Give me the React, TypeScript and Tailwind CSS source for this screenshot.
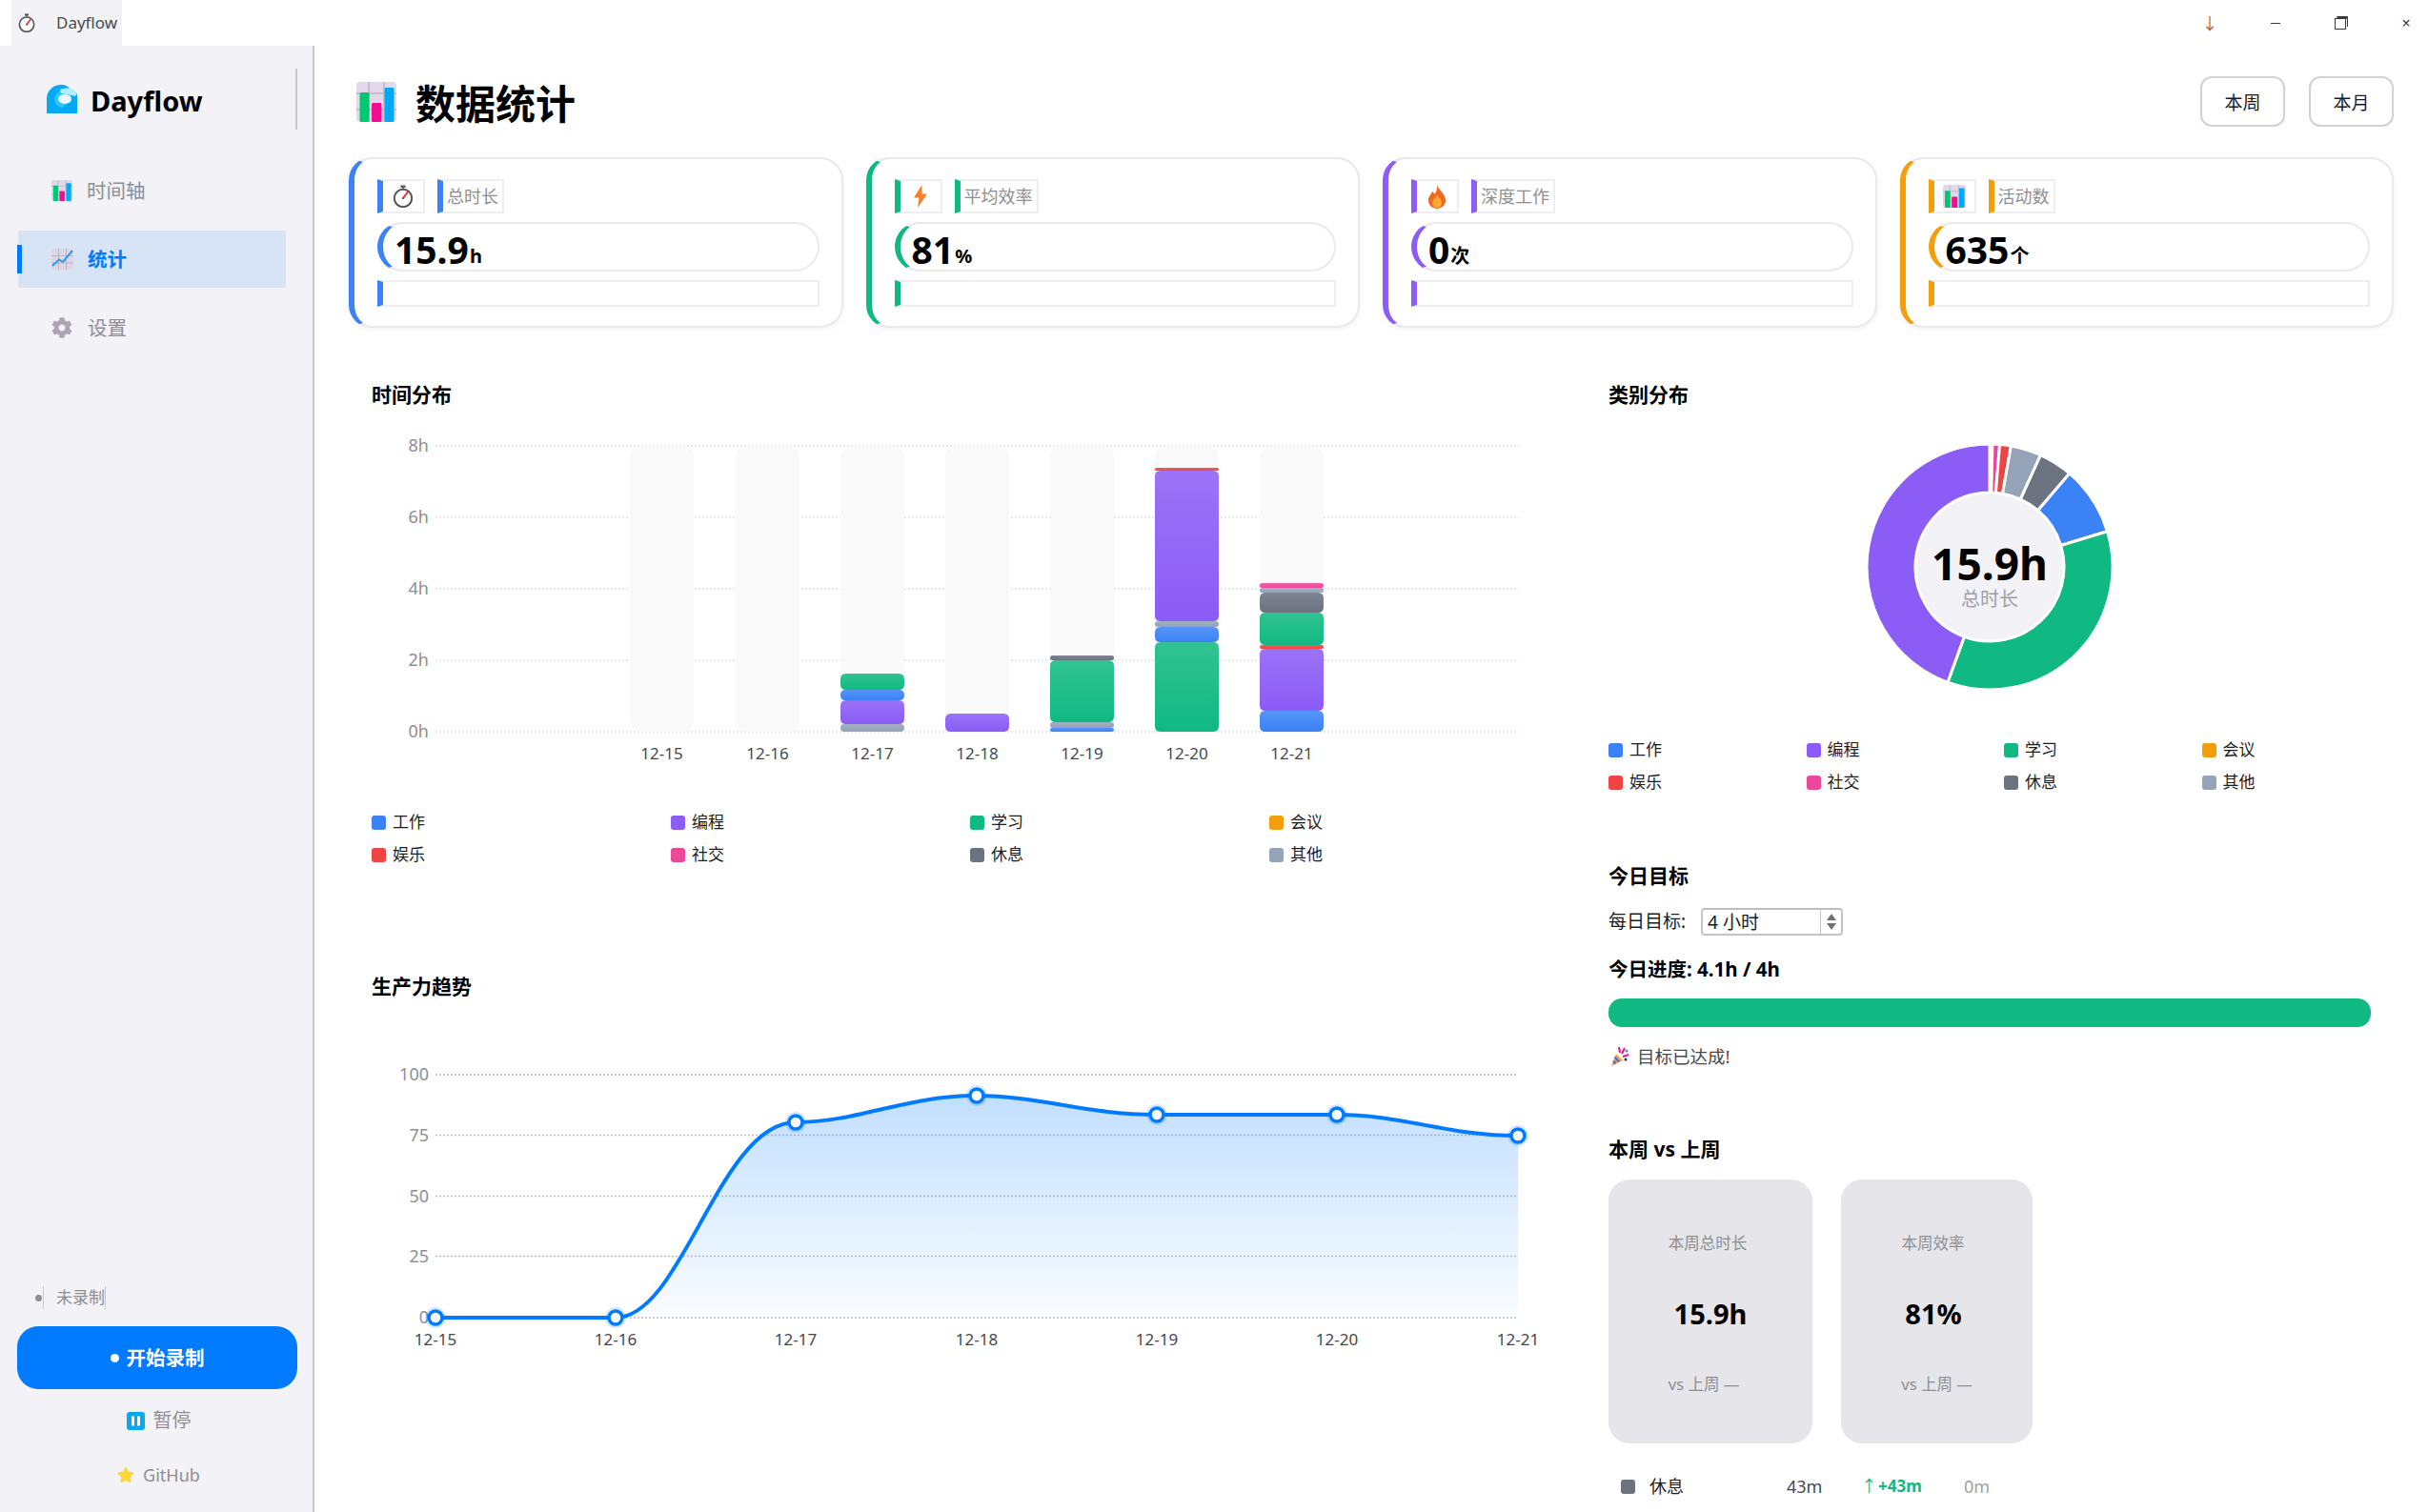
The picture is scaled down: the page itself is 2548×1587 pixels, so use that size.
import { FaCog, FaStar } from "react-icons/fa"

const BLUE = "#3b82f6"
const PURPLE = "#8b5cf6"
const GREEN = "#10b981"
const RED = "#ef4444"
const PINK = "#ec4899"
const GRAY = "#6b7280"
const SLATE = "#94a3b8"

const LEGEND = [
  ["工作", "bg-[#3b82f6]"],
  ["编程", "bg-[#8b5cf6]"],
  ["学习", "bg-[#10b981]"],
  ["会议", "bg-[#f59e0b]"],
  ["娱乐", "bg-[#ef4444]"],
  ["社交", "bg-[#ec4899]"],
  ["休息", "bg-[#6b7280]"],
  ["其他", "bg-[#94a3b8]"],
]

// [colour, top y, bottom y] in chart pixels, read off the bars
const BARS: { day: string; x: number; parts: [string, number, number][] }[] = [
  { day: "12-15", x: 661, parts: [] },
  { day: "12-16", x: 772, parts: [] },
  {
    day: "12-17",
    x: 882,
    parts: [
      [SLATE, 760, 768],
      [PURPLE, 735, 760],
      [BLUE, 724, 735],
      [GREEN, 707, 724],
    ],
  },
  { day: "12-18", x: 992, parts: [[PURPLE, 749, 768]] },
  {
    day: "12-19",
    x: 1102,
    parts: [
      [BLUE, 764, 768],
      [SLATE, 758, 764],
      [GREEN, 693, 758],
      [GRAY, 688, 693],
    ],
  },
  {
    day: "12-20",
    x: 1212,
    parts: [
      [GREEN, 674, 768],
      [BLUE, 658, 674],
      [SLATE, 652, 658],
      [PURPLE, 494, 652],
      [RED, 491, 494],
    ],
  },
  {
    day: "12-21",
    x: 1322,
    parts: [
      [BLUE, 746, 768],
      [PURPLE, 681, 746],
      [RED, 677, 681],
      [GREEN, 643, 677],
      [GRAY, 622, 643],
      [SLATE, 617, 622],
      [PINK, 612, 617],
    ],
  },
]

const SLICES: [string, number, number][] = [
  [PINK, 1.3, 4.7],
  [RED, 4.7, 10],
  [SLATE, 10, 24.5],
  [GRAY, 24.5, 40.5],
  [BLUE, 40.5, 73.2],
  [GREEN, 73.2, 200],
  [PURPLE, 200, 360],
]

const TREND = [
  [457, 1383],
  [646, 1383],
  [835, 1178],
  [1025, 1150],
  [1214, 1170],
  [1403, 1170],
  [1593, 1192],
]

const STATS = [
  { label: "总时长", value: "15.9", unit: "h", icon: <Stopwatch size={24} />, border: "border-l-[#3b82f6]" },
  { label: "平均效率", value: "81", unit: "%", icon: <Bolt />, border: "border-l-[#10b981]" },
  { label: "深度工作", value: "0", unit: "次", icon: <Flame />, border: "border-l-[#8b5cf6]" },
  { label: "活动数", value: "635", unit: "个", icon: <ChartIcon size={24} />, border: "border-l-[#f59e0b]" },
]

function Stopwatch({ size }: { size: number }) {
  return (
    <svg width={size} height={size} viewBox="0 0 24 24">
      <rect x="9.5" y="0.5" width="5" height="2.5" fill="#555" />
      <rect x="11" y="2.5" width="2" height="2.5" fill="#777" />
      <circle cx="12" cy="14" r="9.2" fill="#fff" stroke="#555" strokeWidth="2" />
      <path d="M12 14 L16.5 8" stroke="#ef2b2d" strokeWidth="2" strokeLinecap="round" />
      <circle cx="12" cy="14" r="1" fill="#555" />
    </svg>
  )
}

function ChartIcon({ size }: { size: number }) {
  return (
    <svg width={size} height={size} viewBox="0 0 42 42" className="shrink-0">
      <rect width="42" height="42" rx="4" fill="#e1d9ea" />
      <path d="M13 0V42M29 0V42M0 12H42M0 29H42" stroke="#bdb5c6" strokeWidth="1.5" />
      <rect x="3.5" y="11" width="10" height="31" rx="1.5" fill="#00c872" />
      <rect x="16" y="22" width="10.5" height="20" rx="1.5" fill="#f50c90" />
      <rect x="29.5" y="6" width="10" height="36" rx="1.5" fill="#03a9f4" />
    </svg>
  )
}

function TrendIcon() {
  return (
    <svg width="23" height="22" viewBox="0 0 23 22">
      <rect width="23" height="22" rx="3" fill="#dcd6e6" />
      <path d="M7.5 0V22M15.5 0V22M0 7.5H23M0 15H23" stroke="#bdb5c6" strokeWidth="1" />
      <path d="M1 18L8 11.5L12 14L22 2" fill="none" stroke="#2e9be6" strokeWidth="2" />
    </svg>
  )
}

function Bolt() {
  return (
    <svg width="16" height="24" viewBox="0 0 16 24">
      <path d="M9.5 0L1 13.5H6.5L5 24L15 9.5H9.5Z" fill="#f97e2b" />
    </svg>
  )
}

function Flame() {
  return (
    <svg width="20" height="25" viewBox="0 0 20 25">
      <path d="M10 0C11 5 19 9 19 16C19 21.5 15 25 10 25C5 25 1 21.5 1 16C1 12 4 10 5 7C6.5 8 7 9 7.5 10C9.5 7 10.5 4 10 0Z" fill="#f4651f" />
      <path d="M10 10C11 13 15 15 15 18.5C15 22 13 24 10 24C7 24 5 22 5 18.5C5 15.5 9 13.5 10 10Z" fill="#fba931" />
    </svg>
  )
}

function Party() {
  return (
    <svg width="20" height="22" viewBox="0 0 20 22">
      <path d="M1 21L6 8L13 15Z" fill="#f2a33a" />
      <path d="M3 15.5L5.5 18.5M4.5 11.5L9 16.5" stroke="#4b6fd6" strokeWidth="2" />
      <path d="M9 1L10 7M15 2L12 8M13 11L19 9" stroke="#e6127f" strokeWidth="2" />
      <circle cx="17" cy="5" r="1.5" fill="#1fa5e0" />
      <circle cx="16" cy="14" r="1.5" fill="#2b2b55" />
    </svg>
  )
}

function WaveLogo() {
  return (
    <svg width="32" height="30" viewBox="0 0 32 30" className="shrink-0">
      <path d="M0 30V15C0 6 7 0 15 0C20 0 23 2 25 5L32 10V30Z" fill="#03a9f4" />
      <circle cx="17" cy="15" r="9" fill="#2cc6fb" />
      <path d="M14 5C19 3 25 3 28 5L32 9L30 12L22 10L15 9Z" fill="#b5ecff" />
      <ellipse cx="19" cy="15" rx="7" ry="5" fill="#e8faff" />
      <path d="M16 30C15 25 18 20 24 19L32 14V30Z" fill="#03a9f4" />
    </svg>
  )
}

function PauseIcon() {
  return (
    <svg width="19" height="19" viewBox="0 0 19 19">
      <rect width="19" height="19" rx="3" fill="#03a9f4" />
      <rect x="5" y="4.5" width="3" height="10" fill="#fff" />
      <rect x="11" y="4.5" width="3" height="10" fill="#fff" />
    </svg>
  )
}

function RestoreIcon() {
  return (
    <svg width="14" height="14" viewBox="0 0 14 14">
      <path d="M2.5 0.5H13.5V11" fill="none" stroke="#3a3a3c" strokeWidth="1" />
      <rect x="2.5" y="0" width="11" height="2.5" fill="#3a3a3c" />
      <rect x="0.5" y="2.5" width="11" height="11" fill="#fff" stroke="#3a3a3c" strokeWidth="1" />
    </svg>
  )
}

function Legend() {
  return (
    <div className="grid grid-cols-4 gap-x-[30px] gap-y-[8px]">
      {LEGEND.map(([name, color]) => (
        <div key={name} className="flex h-[26px] items-center gap-[7px]">
          <span className={`h-[15px] w-[15px] rounded-[3px] ${color}`} />
          <span className="text-[17px] text-[#1c1c1e]">{name}</span>
        </div>
      ))}
    </div>
  )
}

function StatCard({ stat }: { stat: (typeof STATS)[number] }) {
  return (
    <div className={`h-[179px] rounded-[24px] border-2 border-l-[6px] border-[#e9e9ee] bg-white pt-[21px] pr-[23px] pl-[24px] shadow-[0_2px_6px_rgba(0,0,0,0.05)] ${stat.border}`}>
      <div className="flex h-[36px] gap-[13px]">
        <div className={`flex w-[50px] items-center justify-center border-2 border-l-[6px] border-[#eeeef2] ${stat.border}`}>
          {stat.icon}
        </div>
        <div className={`flex items-center border-2 border-l-[6px] border-[#eeeef2] px-[4px] text-[18px] text-[#8e8e93] ${stat.border}`}>
          {stat.label}
        </div>
      </div>
      <div className={`mt-[9px] flex h-[52px] items-end rounded-full border-2 border-l-[6px] border-[#e9e9ee] pl-3 font-bold text-black ${stat.border}`}>
        <span className="text-[39px] leading-[42px]">{stat.value}</span>
        <span className="mb-[2px] ml-[1px] text-[20px] leading-[24px]">{stat.unit}</span>
      </div>
      <div className={`mt-[9px] h-[28px] border-2 border-l-[6px] border-[#eeeef2] ${stat.border}`} />
    </div>
  )
}

function SectionTitle({ children }: { children: React.ReactNode }) {
  return <h3 className="h-7 text-[21px] leading-[28px] font-bold text-black">{children}</h3>
}

function barPath(x: number, w: number, top: number, bottom: number) {
  const r = Math.min(6, (bottom - top) / 2)
  return `M${x} ${bottom - r}V${top + r}Q${x} ${top} ${x + r} ${top}H${x + w - r}Q${x + w} ${top} ${x + w} ${top + r}V${bottom - r}Q${x + w} ${bottom} ${x + w - r} ${bottom}H${x + r}Q${x} ${bottom} ${x} ${bottom - r}Z`
}

function BarChart() {
  return (
    <svg width="1226" height="380" viewBox="390 440 1226 380" className="mt-3 block">
      <defs>
        <linearGradient id="shade" x1="0" y1="0" x2="0" y2="1">
          <stop offset="0" stopColor="#fff" stopOpacity="0.14" />
          <stop offset="1" stopColor="#fff" stopOpacity="0" />
        </linearGradient>
      </defs>
      {["8h", "6h", "4h", "2h", "0h"].map((label, i) => (
        <g key={label}>
          <line x1="457" x2="1594" y1={468 + i * 75} y2={468 + i * 75} stroke="#e8e8e8" strokeWidth="2" strokeDasharray="2 2" />
          <text x="450" y={474 + i * 75} textAnchor="end" fontSize="18" fill="#8e8e93">
            {label}
          </text>
        </g>
      ))}
      {BARS.map((bar) => (
        <g key={bar.day}>
          <rect x={bar.x} y="468" width="67" height="300" rx="12" fill="#f9f9f9" />
          {bar.parts.map(([color, top, bottom]) => (
            <g key={color + top}>
              <path d={barPath(bar.x, 67, top, bottom)} fill={color} />
              <path d={barPath(bar.x, 67, top, bottom)} fill="url(#shade)" />
            </g>
          ))}
          <text x={bar.x + 33.5} y="797" textAnchor="middle" fontSize="17" fill="#48484a">
            {bar.day}
          </text>
        </g>
      ))}
    </svg>
  )
}

function TrendChart() {
  const line = "M457 1383H646C716 1383 755 1178 835 1178C900 1178 950 1150 1025 1150C1090 1150 1140 1170 1214 1170H1403C1470 1170 1520 1192 1593 1192"
  return (
    <svg width="1240" height="330" viewBox="390 1100 1240 330" className="block">
      <defs>
        <linearGradient id="area" x1="0" y1="0" x2="0" y2="1">
          <stop offset="0" stopColor="#007aff" stopOpacity="0.24" />
          <stop offset="1" stopColor="#007aff" stopOpacity="0.02" />
        </linearGradient>
      </defs>
      {[
        ["100", 1128],
        ["75", 1191.5],
        ["50", 1255.5],
        ["25", 1318.5],
        ["0", 1383],
      ].map(([label, y]) => (
        <g key={label}>
          <line x1="457" x2="1593" y1={y} y2={y} stroke="#bdbdc2" strokeWidth="1.5" strokeDasharray="2 2" />
          <text x="450" y={Number(y) + 6} textAnchor="end" fontSize="18" fill="#8e8e93">
            {label}
          </text>
        </g>
      ))}
      <path d={`${line}V1383H646Z`} fill="url(#area)" />
      <path d={line} fill="none" stroke="#007aff" strokeWidth="4" />
      {TREND.map(([x, y], i) => (
        <g key={x}>
          <circle cx={x} cy={y} r="11" fill="#007aff" fillOpacity="0.18" />
          <circle cx={x} cy={y} r="7" fill="#fff" stroke="#007aff" strokeWidth="3.5" />
          <text x={x} y="1412" textAnchor="middle" fontSize="17" fill="#48484a">
            {`12-${15 + i}`}
          </text>
        </g>
      ))}
    </svg>
  )
}

function slicePath(from: number, to: number) {
  const cx = 400
  const cy = 155
  const pt = (r: number, deg: number) => {
    const a = (deg * Math.PI) / 180
    return `${cx + r * Math.sin(a)} ${cy - r * Math.cos(a)}`
  }
  const large = to - from > 180 ? 1 : 0
  return `M${pt(129, from)}A129 129 0 ${large} 1 ${pt(129, to)}L${pt(78, to)}A78 78 0 ${large} 0 ${pt(78, from)}Z`
}

function Donut() {
  return (
    <div className="relative mt-3 h-[300px]">
      <svg width="802" height="300" viewBox="0 0 802 300" className="block">
        <circle cx="400" cy="155" r="80" fill="#f2f2f7" />
        {SLICES.map(([color, from, to]) => (
          <path key={color} d={slicePath(from, to)} fill={color} stroke="#fff" strokeWidth="3" />
        ))}
      </svg>
      <div className="absolute top-[120px] left-[320px] flex w-[160px] flex-col items-center">
        <span className="text-[46px] leading-[62px] font-bold text-black">15.9h</span>
        <span className="-mt-[7px] text-[20px] leading-[28px] text-[#a0a0a5]">总时长</span>
      </div>
    </div>
  )
}

function CompareCard({
  label,
  value,
  className,
  labelClass,
  valueClass,
  vsClass,
}: {
  label: string
  value: string
  className: string
  labelClass: string
  valueClass: string
  vsClass: string
}) {
  return (
    <div className={`flex h-[277px] flex-col items-center justify-center rounded-[22px] bg-[#e5e5ea] pt-[5px] ${className}`}>
      <div className={`flex h-[74px] items-center text-[16.5px] text-[#8e8e93] ${labelClass}`}>{label}</div>
      <div className={`flex h-[74px] items-center text-[29px] font-bold text-black ${valueClass}`}>{value}</div>
      <div className={`flex h-[74px] items-center text-[16.5px] text-[#8e8e93] ${vsClass}`}>vs 上周 —</div>
    </div>
  )
}

function Sidebar() {
  return (
    <aside className="flex w-[330px] shrink-0 flex-col border-r-2 border-[#c7c7cc] bg-[#f2f2f7]">
      <div className="relative mt-[24px] flex h-[64px] items-center pl-[49px]">
        <WaveLogo />
        <span className="mt-[4px] ml-[14px] text-[29px] font-bold text-black">Dayflow</span>
        <span className="absolute top-0 left-[310px] h-full w-[2px] bg-[#c7c7cc]" />
      </div>
      <nav className="mt-[34px] flex flex-col">
        <div className="flex h-[60px] items-center gap-[15px] pl-[54px] text-[20.5px] text-[#8e8e93]">
          <ChartIcon size={22} />
          时间轴
        </div>
        <div className="relative mt-[12px] ml-[19px] flex h-[60px] w-[281px] items-center gap-[15px] bg-[#d6e4f5] pl-[35px] text-[20.5px] font-bold text-[#007aff]">
          <span className="absolute top-[15px] -left-px h-[30px] w-[5px] bg-[#007aff]" />
          <TrendIcon />
          统计
        </div>
        <div className="mt-[12px] flex h-[60px] items-center gap-[16px] pl-[54px] text-[20.5px] text-[#8e8e93]">
          <FaCog className="text-[22px] text-[#aaa4b6]" />
          设置
        </div>
      </nav>
      <div className="mt-auto flex flex-col pb-[24px]">
        <div className="flex h-[24px] items-center pl-[37px] text-[17px] leading-[24px] text-[#8e8e93]">
          <span className="h-[7px] w-[7px] rounded-full bg-[#8e8e93]" />
          <span className="ml-[1px] border-r border-l border-[#c7c7cc] pl-[13px]">未录制</span>
        </div>
        <button className="mt-[18px] ml-[18px] flex h-[66px] w-[294px] items-center justify-center gap-[8px] rounded-[22px] bg-[#007aff] text-[20.5px] font-bold text-white">
          <span className="h-[9px] w-[9px] rounded-full bg-white" />
          开始录制
        </button>
        <div className="mt-[18px] flex h-[30px] items-center justify-center gap-[9px] pl-[5px] text-[20px] text-[#8e8e93]">
          <PauseIcon />
          暂停
        </div>
        <div className="mt-[27px] flex h-[30px] items-center justify-center gap-[9px] pl-[5px] text-[18px] text-[#8e8e93]">
          <FaStar className="text-[18px] text-[#fdd835]" />
          GitHub
        </div>
      </div>
    </aside>
  )
}

export default function App() {
  return (
    <div className="flex h-[1587px] w-[2548px] flex-col overflow-hidden bg-white font-['Noto_Sans','Noto_Sans_CJK_SC',sans-serif]">
      <header className="flex h-12 shrink-0 items-center">
        <div className="ml-3 flex h-12 w-[116px] items-center bg-[#f2f2f7] pl-[6px]">
          <Stopwatch size={20} />
          <span className="ml-[21px] text-[17px] text-[#48484a]">Dayflow</span>
        </div>
        <div className="ml-auto flex items-center">
          <span className="w-[20px] text-center text-[17px] leading-none text-[#b5623a]">↓</span>
          <span className="ml-[54px] h-px w-[10px] bg-[#3a3a3c]" />
          <span className="ml-[57px] flex">
            <RestoreIcon />
          </span>
          <span className="mr-[18px] ml-[56px] w-[10px] text-center text-[16px] leading-none text-[#3a3a3c]">×</span>
        </div>
      </header>
      <div className="flex min-h-0 flex-1">
        <Sidebar />
        <main className="min-w-0 flex-1 pt-[32px] pr-[36px] pl-[36px]">
          <div className="flex h-[53px] items-center">
            <span className="ml-[8px]">
              <ChartIcon size={42} />
            </span>
            <h1 className="mt-[3px] ml-[20px] text-[42px] font-bold text-black">数据统计</h1>
            <div className="ml-auto flex gap-[25px]">
              <button className="h-[53px] w-[89px] rounded-[12px] border-2 border-[#d1d1d6] pt-[4px] text-[19px] text-[#1c1c1e]">本周</button>
              <button className="h-[53px] w-[89px] rounded-[12px] border-2 border-[#d1d1d6] pt-[4px] text-[19px] text-[#1c1c1e]">本月</button>
            </div>
          </div>
          <div className="mt-[32px] grid grid-cols-4 gap-6">
            {STATS.map((stat) => (
              <StatCard key={stat.label} stat={stat} />
            ))}
          </div>
          <div className="mt-[56px] flex gap-6">
            <div className="w-[1274px] shrink-0 pl-6">
              <SectionTitle>时间分布</SectionTitle>
              <BarChart />
              <div className="mt-[30px] w-[1226px]">
                <Legend />
              </div>
              <div className="mt-[111px]">
                <SectionTitle>生产力趋势</SectionTitle>
              </div>
              <div className="mt-[51px]">
                <TrendChart />
              </div>
            </div>
            <div className="min-w-0 flex-1 px-6">
              <SectionTitle>类别分布</SectionTitle>
              <Donut />
              <div className="mt-[34px]">
                <Legend />
              </div>
              <div className="mt-[71px]">
                <SectionTitle>今日目标</SectionTitle>
              </div>
              <div className="mt-[20px] flex h-[29px] items-center gap-[16px] text-[19px] text-[#1c1c1e]">
                每日目标:
                <div className="flex h-[29px] w-[149px] items-stretch rounded-[4px] border-2 border-[#c4c4c4] border-t-[#bdbdbd]">
                  <span className="flex-1 pl-[5px] text-[19px] leading-[26px] text-[#1c1c1e]">4 小时</span>
                  <span className="flex w-[22px] flex-col items-center justify-center gap-[3px] border-l border-[#c4c4c4]">
                    <span className="h-0 w-0 border-x-[5px] border-b-[7px] border-x-transparent border-b-[#707070]" />
                    <span className="h-0 w-0 border-x-[5px] border-t-[7px] border-x-transparent border-t-[#707070]" />
                  </span>
                </div>
              </div>
              <div className="mt-[21px] h-7 text-[20.5px] leading-7 font-bold text-black">今日进度: 4.1h / 4h</div>
              <div className="mt-[17px] h-[30px] rounded-[14px] bg-[#10b981]" />
              <div className="mt-[17px] flex h-7 items-center gap-[8px] pl-[2px] text-[18.5px] text-[#48484a]">
                <Party />
                目标已达成!
              </div>
              <div className="mt-[69px]">
                <SectionTitle>本周 vs 上周</SectionTitle>
              </div>
              <div className="mt-[18px] flex gap-[30px]">
                <CompareCard label="本周总时长" value="15.9h" className="w-[214px]" labelClass="pr-[6px]" valueClass="" vsClass="pr-[14px]" />
                <CompareCard label="本周效率" value="81%" className="w-[201px]" labelClass="pr-[8px]" valueClass="pr-[7px]" vsClass="" />
              </div>
              <div className="mt-[31px] flex h-7 items-center pl-[13px] text-[18px]">
                <span className="h-[15px] w-[15px] rounded-[3px] bg-[#6b7280]" />
                <span className="ml-[15px] w-[144px] text-[#1c1c1e]">休息</span>
                <span className="w-[78px] text-[#48484a]">43m</span>
                <span className="flex w-[108px] items-center gap-[8px] text-[17px] font-bold text-[#10b981]">
                  <span className="w-[10px] font-normal">↑</span>
                  +43m
                </span>
                <span className="text-[#a0a0a5]">0m</span>
              </div>
            </div>
          </div>
        </main>
      </div>
    </div>
  )
}
